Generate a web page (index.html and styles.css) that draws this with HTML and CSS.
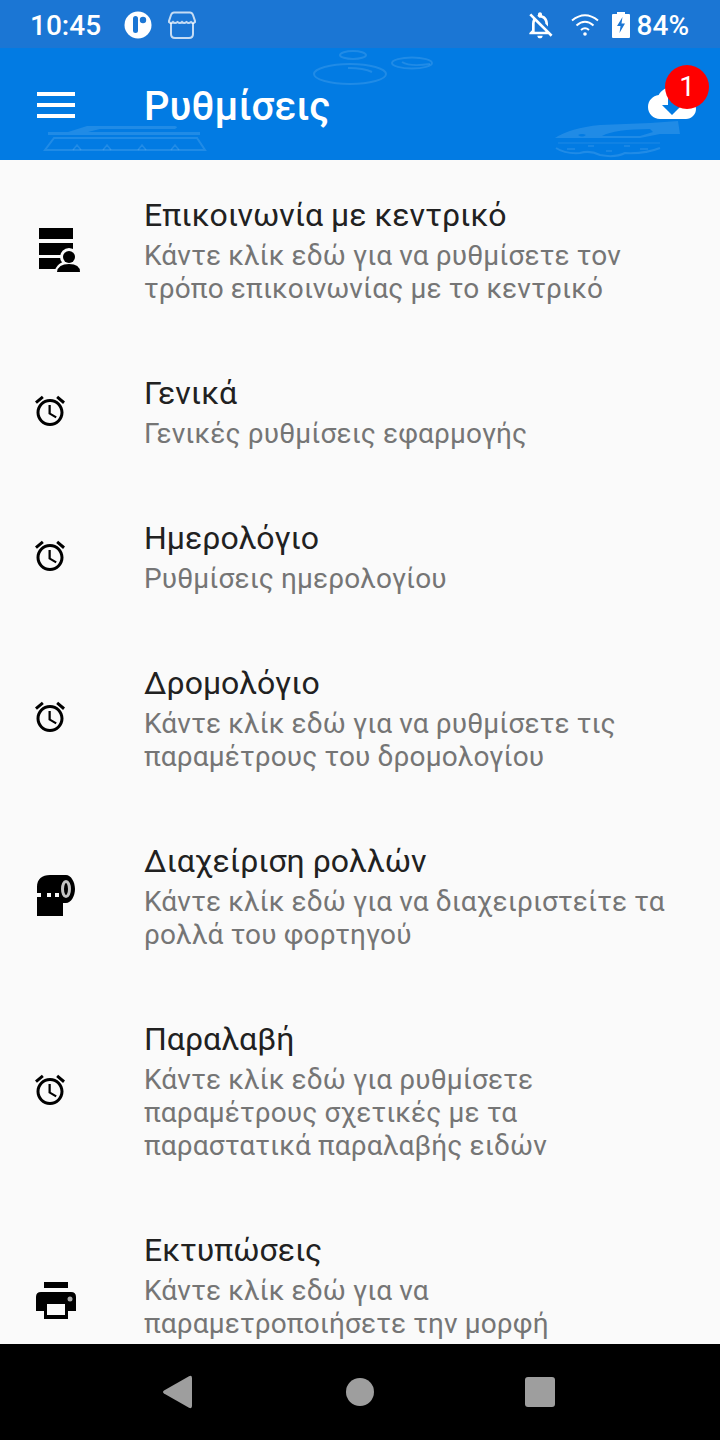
FILE: index.html
```html
<!DOCTYPE html>
<html lang="el">
<head>
    <meta charset="UTF-8">
    <meta name="viewport" content="width=device-width, initial-scale=1.0">
    <title>Ρυθμίσεις</title>
    <link rel="stylesheet" href="styles.css">
</head>
<body>
    <div class="status-bar">
        <span class="status-text status-time">10:45</span>
        <svg class="status-app" width="28" height="28" viewBox="0 0 28 28">
            <circle cx="14" cy="14" r="13.5" fill="#fff"/>
            <rect x="9" y="5" width="5" height="17" rx="2.5" fill="#1b76d4"/>
            <circle cx="19" cy="9" r="3.2" fill="#1b76d4"/>
        </svg>
        <svg class="status-store" width="28" height="28" viewBox="0 0 28 28" fill="none" stroke="#fff" stroke-opacity=".75" stroke-width="2">
            <path d="M6 1.500H22Q24 1.500 25 4L27 10V11Q25 13 23 11Q20.500 13 18.500 11Q16 13 14 11Q12 13 9.500 11Q7 13 5 11Q3 13 1 11V10L3 4Q4 1.500 6 1.500Z"/>
            <path d="M3 12V23Q3 27 7 27H21Q25 27 25 23V12"/>
        </svg>
        <span class="status-spacer"></span>
        <svg class="status-bell" width="32" height="32" viewBox="0 0 24 24" fill="#fff">
            <path d="M12 22c1.100 0 2-.9 2-2h-4c0 1.100.9 2 2 2zm0-15.500c2.490 0 4 2.020 4 4.500v.1l2 2V11c0-3.070-1.630-5.640-4.500-6.320V4c0-.83-.67-1.500-1.500-1.500s-1.500.67-1.500 1.500v.68c-.24.06-.47.15-.69.23l1.640 1.640c.18-.02.36-.05.55-.05zM5.410 3.350L4 4.760l2.810 2.810C6.290 8.570 6 9.740 6 11v5l-2 2v1h14.240l1.740 1.740 1.410-1.410L5.410 3.350zM16 17H8v-6c0-.68.12-1.320.34-1.900L16 16.760V17z"/>
        </svg>
        <svg class="status-wifi" width="28" height="24" viewBox="0 0 28 24" fill="none" stroke="#fff" stroke-width="2">
            <path d="M1 7.500Q14 -3 27 7.500"/>
            <path d="M5.500 12.500Q14 5 22.500 12.500"/>
            <path d="M10 17Q14 13.500 18 17"/>
            <circle cx="14" cy="21" r="1.800" fill="#fff" stroke="none"/>
        </svg>
        <svg class="status-battery" width="18" height="26" viewBox="0 0 18 26">
            <path d="M5 2V0H13V2H17Q18 2 18 3V25Q18 26 17 26H1Q0 26 0 25V3Q0 2 1 2Z" fill="#fff"/>
            <path d="M10.500 5L5 14H8.500L7.500 21L13 11.500H9.500Z" fill="#1b76d4"/>
        </svg>
        <span class="status-text status-percent">84%</span>
    </div>

    <header class="app-bar">
        <svg class="watermark" width="720" height="112" viewBox="0 0 720 112" fill="none" stroke="#fff" stroke-opacity=".12" stroke-width="2">
            <!-- left: cabinet -->
            <path d="M68 84L87 78H175Q179 79 175 81H100L88 84Z" fill="#fff" fill-opacity=".12" stroke="none"/>
            <path d="M48 85.500H200" stroke-width="3"/>
            <path d="M54 90H197L205 102H45Z"/>
            <path d="M73 102L77 97L81 102M103 102L107 97L111 102M138 102L142 97L146 102M171 102L175 97L179 102" stroke-width="1.500"/>
            <!-- middle: bubbles -->
            <ellipse cx="353" cy="7" rx="13" ry="4"/>
            <ellipse cx="350" cy="26" rx="36" ry="10"/>
            <path d="M348 20Q364 20 372 24"/>
            <ellipse cx="412" cy="15" rx="20" ry="5.500"/>
            <path d="M402 14Q410 19 430 16"/>
            <!-- right: iron -->
            <path fill-rule="evenodd" d="M555 90Q570 80 600 77L650 75L678 73L680 86L660 86L640 90ZM578 87Q582 85 586 87Q582 90 578 87ZM602 88Q615 81 650 81L653 84L640 88Z" fill="#fff" fill-opacity=".12" stroke="none"/>
            <path d="M558 95H660" stroke-width="1"/>
            <path d="M556 100Q565 106 580 105Q590 102 600 107Q615 110 625 105Q645 106 660 100"/>
            <path d="M567 101H575M588 98H594M606 103H612M624 98H630M640 101H648" stroke-width="1.500"/>
        </svg>
        <svg class="menu-icon" width="38" height="26" viewBox="0 0 38 26" fill="#fff">
            <rect y="0" width="38" height="4"/>
            <rect y="11" width="38" height="4"/>
            <rect y="22" width="38" height="4"/>
        </svg>
        <h1 class="app-title">Ρυθμίσεις</h1>
        <div class="sync">
            <svg width="48" height="48" viewBox="0 0 24 24" fill="#fff">
                <path d="M19.350 10.040C18.670 6.590 15.640 4 12 4 9.110 4 6.600 5.640 5.350 8.040 2.340 8.360 0 10.910 0 14c0 3.310 2.690 6 6 6h13c2.760 0 5-2.240 5-5 0-2.640-2.050-4.780-4.650-4.960zM17 13l-5 5-5-5h3V9h4v4h3z"/>
            </svg>
            <span class="badge">1</span>
        </div>
    </header>

    <main class="settings">
        <div class="row">
            <svg class="icon icon-wide" width="48" height="48" viewBox="0 0 48 48">
                <path d="M7 3H41V14H7ZM7 18H41V30H7ZM7 33H41V44H7Z"/>
                <circle cx="37" cy="32" r="9" fill="#fafafa"/>
                <path d="M22 48Q25 36 37 36T52 48Z" fill="#fafafa"/>
                <circle cx="37" cy="32" r="6"/>
                <path d="M25 47Q26 39 37 39T48 47Z"/>
            </svg>
            <div class="row-text">
                <div class="row-title">Επικοινωνία με κεντρικό</div>
                <div class="row-sub">Κάντε κλίκ εδώ για να ρυθμίσετε τον τρόπο επικοινωνίας με το κεντρικό</div>
            </div>
        </div>
        <div class="row">
            <svg class="icon" width="36" height="36" viewBox="0 0 24 24"><use href="#alarm"/></svg>
            <div class="row-text">
                <div class="row-title">Γενικά</div>
                <div class="row-sub">Γενικές ρυθμίσεις εφαρμογής</div>
            </div>
        </div>
        <div class="row">
            <svg class="icon" width="36" height="36" viewBox="0 0 24 24"><use href="#alarm"/></svg>
            <div class="row-text">
                <div class="row-title">Ημερολόγιο</div>
                <div class="row-sub">Ρυθμίσεις ημερολογίου</div>
            </div>
        </div>
        <div class="row">
            <svg class="icon" width="36" height="36" viewBox="0 0 24 24"><use href="#alarm"/></svg>
            <div class="row-text">
                <div class="row-title">Δρομολόγιο</div>
                <div class="row-sub">Κάντε κλίκ εδώ για να ρυθμίσετε τις παραμέτρους του δρομολογίου</div>
            </div>
        </div>
        <div class="row">
            <svg class="icon icon-wide" width="48" height="48" viewBox="0 0 48 48">
                <path d="M5 45V16C5 8 10 4 18 4H34C39 4 43 11 43 18S39 32 34 32H31V45Z"/>
                <path d="M4 22H9V26H4ZM15 22H19V26H15ZM23 22H27V26H23Z" fill="#fafafa"/>
                <ellipse cx="34" cy="18" rx="3.500" ry="7.500" fill="none" stroke="#c4c4c4" stroke-width="3"/>
            </svg>
            <div class="row-text">
                <div class="row-title">Διαχείριση ρολλών</div>
                <div class="row-sub">Κάντε κλίκ εδώ για να διαχειριστείτε τα ρολλά του φορτηγού</div>
            </div>
        </div>
        <div class="row">
            <svg class="icon" width="36" height="36" viewBox="0 0 24 24"><use href="#alarm"/></svg>
            <div class="row-text">
                <div class="row-title">Παραλαβή</div>
                <div class="row-sub">Κάντε κλίκ εδώ για ρυθμίσετε παραμέτρους σχετικές με τα παραστατικά παραλαβής ειδών</div>
            </div>
        </div>
        <div class="row">
            <svg class="icon icon-wide" width="48" height="48" viewBox="0 0 48 48">
                <path d="M12 5H36V11H12Z"/>
                <path d="M9 15H39Q44 15 44 20V34H36V42H12V34H4V20Q4 15 9 15Z"/>
                <path d="M15 27H33V38H15Z" fill="#fafafa"/>
                <circle cx="38" cy="22" r="2.500" fill="#aaa"/>
            </svg>
            <div class="row-text row-text-cut">
                <div class="row-title">Εκτυπώσεις</div>
                <div class="row-sub">Κάντε κλίκ εδώ για να<br>παραμετροποιήσετε την μορφή</div>
            </div>
        </div>
    </main>

    <nav class="nav-bar">
        <svg width="32" height="34" viewBox="0 0 32 34" fill="#9e9e9e">
            <path d="M1 15.500L26 1.200Q29 0 29 3V31Q29 34 26 32.800L1 18.500Q-1 17 1 15.500Z"/>
        </svg>
        <span class="nav-home"></span>
        <span class="nav-square"></span>
    </nav>

    <svg class="defs" width="0" height="0">
        <symbol id="alarm" viewBox="0 0 24 24">
            <path d="M22 5.720l-4.600-3.860-1.290 1.530 4.600 3.860L22 5.720zM7.880 3.390L6.600 1.860 2 5.710l1.290 1.530 4.590-3.850zM12.500 8H11v6l4.750 2.850.75-1.230-4-2.370V8zM12 4c-4.970 0-9 4.030-9 9s4.020 9 9 9c4.970 0 9-4.030 9-9s-4.030-9-9-9zm0 16c-3.870 0-7-3.130-7-7s3.130-7 7-7 7 3.130 7 7-3.130 7-7 7z"/>
        </symbol>
    </svg>
</body>
</html>
```

FILE: styles.css
```css
body {
    font-family: Roboto, "Noto Sans", sans-serif;
    margin: 0;
    padding: 0;
    width: 720px;
    height: 1440px;
    display: flex;
    flex-direction: column;
    background-color: #fafafa;
    overflow: hidden;
}

.status-bar {
    height: 48px;
    flex: none;
    display: flex;
    align-items: center;
    padding: 2px 31px 0 30px;
    box-sizing: border-box;
    background-color: #1b76d4;
}

.status-text {
    color: #fff;
    font-size: 28px;
    font-weight: 500;
}

.status-app {
    margin-left: 23px;
}

.status-store {
    margin-left: 16px;
}

.status-spacer {
    flex: 1;
}

.status-wifi {
    margin-left: 15px;
}

.status-battery {
    margin-left: 13px;
}

.status-percent {
    margin-left: 7px;
}

.app-bar {
    position: relative;
    height: 112px;
    flex: none;
    display: flex;
    align-items: center;
    padding: 0 24px 0 37px;
    box-sizing: border-box;
    background-color: #027be3;
}

.watermark {
    position: absolute;
    top: 0;
    left: 0;
}

.menu-icon {
    flex: none;
    margin-top: 2px;
}

.app-title {
    margin: 4px 0 0 69px;
    flex: 1;
    color: #fff;
    font-size: 40px;
    font-weight: 500;
}

.sync {
    position: relative;
    width: 48px;
    height: 48px;
    margin-top: -2px;
}

.badge {
    position: absolute;
    top: -14px;
    left: 17px;
    width: 44px;
    height: 44px;
    border-radius: 50%;
    background-color: #f00;
    color: #fff;
    font-size: 28px;
    line-height: 44px;
    text-align: center;
}

.settings {
    flex: 1;
    min-height: 0;
    overflow: hidden;
}

.row {
    display: flex;
    align-items: center;
    padding: 32px 40px 32px 32px;
}

.icon {
    flex: none;
    margin-right: 76px;
}

.icon-wide {
    margin-right: 64px;
}

.row-text {
    flex: 1;
    min-width: 0;
    padding: 4px 0 1px;
}

.row-text-cut {
    padding-bottom: 34px;
}

.row-title {
    color: #212121;
    font-size: 32px;
    line-height: 38px;
    margin-bottom: 5px;
}

.row-sub {
    color: #757575;
    font-size: 28px;
    line-height: 33px;
    letter-spacing: 0.13px;
}

.nav-bar {
    height: 96px;
    flex: none;
    display: flex;
    align-items: center;
    justify-content: space-between;
    padding: 0 165px 0 163px;
    box-sizing: border-box;
    background-color: #000;
}

.nav-home {
    width: 28px;
    height: 28px;
    border-radius: 50%;
    background-color: #9e9e9e;
}

.nav-square {
    width: 30px;
    height: 30px;
    border-radius: 3px;
    background-color: #9e9e9e;
}

.defs {
    position: absolute;
}
```
